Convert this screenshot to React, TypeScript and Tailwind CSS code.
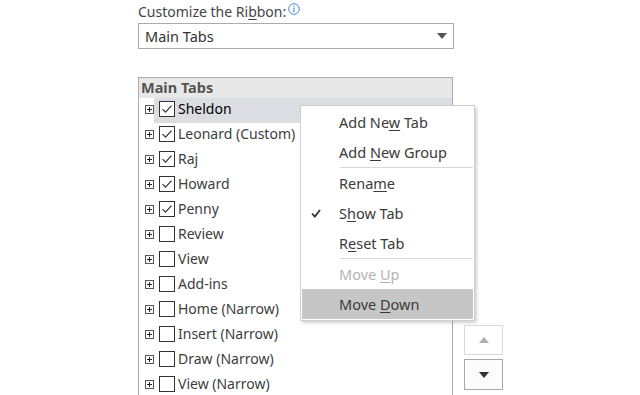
import React from "react"

const font = { fontFamily: '"Noto Sans", "Open Sans", sans-serif' }

type Row = { label: string; checked: boolean; selected?: boolean }

const rows: Row[] = [
  { label: "Sheldon", checked: true, selected: true },
  { label: "Leonard (Custom)", checked: true },
  { label: "Raj", checked: true },
  { label: "Howard", checked: true },
  { label: "Penny", checked: true },
  { label: "Review", checked: false },
  { label: "View", checked: false },
  { label: "Add-ins", checked: false },
  { label: "Home (Narrow)", checked: false },
  { label: "Insert (Narrow)", checked: false },
  { label: "Draw (Narrow)", checked: false },
  { label: "View (Narrow)", checked: false },
]

function PlusBox() {
  return (
    <svg width="9" height="9" viewBox="0 0 9 9" className="shrink-0">
      <rect x="0.5" y="0.5" width="8" height="8" fill="white" stroke="#555" />
      <path d="M2 4.5h5M4.5 2v5" stroke="#222" strokeWidth="1" />
    </svg>
  )
}

function CheckBox({ checked }: { checked: boolean }) {
  return (
    <svg width="16" height="16" viewBox="0 0 16 16" className="shrink-0">
      <rect x="0.5" y="0.5" width="15" height="15" fill="white" stroke="#333" />
      {checked && <path d="M3.5 8.2l3 3 6-6.5" fill="none" stroke="#333" strokeWidth="1.2" />}
    </svg>
  )
}

// letter with access-key underline
function U({ children }: { children: React.ReactNode }) {
  return <span className="underline underline-offset-[2px] decoration-1">{children}</span>
}

function MenuItem({
  children,
  checked,
  disabled,
  active,
}: {
  children: React.ReactNode
  checked?: boolean
  disabled?: boolean
  active?: boolean
}) {
  return (
    <div
      className={`h-[30px] mx-[1px] flex items-center relative ${active ? "bg-[#c6c6c6]" : ""} ${
        disabled ? "text-[#b4b4b4]" : "text-[#3a3a3a]"
      }`}
    >
      {checked && (
        <svg width="10" height="9" viewBox="0 0 10 9" className="absolute left-[9px] top-[11px]">
          <path d="M1 4.5l2.8 3L9 1" fill="none" stroke="#333" strokeWidth="1.8" />
        </svg>
      )}
      <span className="pl-[37px]">{children}</span>
    </div>
  )
}

export default function App() {
  return (
    <div className="w-[640px] h-[395px] overflow-hidden bg-white relative text-[14px] leading-none" style={font}>
      <div className="pl-[138px] pt-[3px]">
        {/* Label */}
        <div className="flex items-start h-[20px] text-[#444] text-[14px]">
          <span className="pt-[2px]">
            Customize the Ri<U>b</U>bon:
          </span>
          <svg width="12" height="12" viewBox="0 0 12 12" className="ml-[2px]">
            <circle cx="6" cy="6" r="5.3" fill="none" stroke="#3a7bd5" strokeWidth="0.9" />
            <rect x="5.5" y="2.6" width="1" height="1.1" fill="#3a7bd5" />
            <rect x="5.5" y="4.6" width="1" height="4.6" fill="#3a7bd5" />
          </svg>
        </div>

        {/* Dropdown */}
        <div className="w-[316px] h-[26px] border border-[#ababab] flex items-center justify-between pl-[6px] pr-[6px] text-[#333] text-[14.5px] bg-white">
          <span>Main Tabs</span>
          <svg width="10" height="6" viewBox="0 0 10 6">
            <path d="M0 0h10L5 6z" fill="#555" />
          </svg>
        </div>

        <div className="flex mt-[28px]">
          {/* List box */}
          <div className="w-[315px] h-[340px] border border-[#ababab] border-b-0 shrink-0">
            <div className="h-[20px] bg-[#e8e8e8] flex items-center pl-[2px] pb-[1px] font-bold text-[14.5px] text-[#555]">
              Main Tabs
            </div>
            {rows.map((r) => (
              <div key={r.label} className="h-[25px] flex items-center pl-[6px] pb-[3px]">
                <PlusBox />
                <div
                  className={`flex-1 h-[25px] -mb-[3px] flex items-center pl-[5px] pb-[3px] gap-[3px] ${
                    r.selected ? "bg-[#dcdde2] text-black" : "text-[#3d3d3d]"
                  }`}
                >
                  <CheckBox checked={r.checked} />
                  <span className="text-[14px] whitespace-nowrap">{r.label}</span>
                </div>
              </div>
            ))}
          </div>

          {/* Up / down buttons */}
          <div className="flex flex-col gap-[4px] pt-[248px] ml-[11px]">
            <div className="w-[39px] h-[30px] border border-[#dadada] flex items-center justify-center bg-white">
              <svg width="10" height="6" viewBox="0 0 10 6">
                <path d="M5 0l5 6H0z" fill="#b0b0b0" />
              </svg>
            </div>
            <div className="w-[39px] h-[31px] border border-[#a8a8a8] flex items-center justify-center bg-[#fcfcfc]">
              <svg width="10" height="6" viewBox="0 0 10 6">
                <path d="M0 0h10L5 6z" fill="#333" />
              </svg>
            </div>
          </div>
        </div>
      </div>

      {/* Context menu */}
      <div className="absolute left-[300px] top-[105px] w-[175px] bg-white border border-[#cfcfcf] shadow-[2px_2px_3px_rgba(0,0,0,0.18)] py-[1px] text-[14.5px]">
        <MenuItem>
          Add Ne<U>w</U> Tab
        </MenuItem>
        <MenuItem>
          Add <U>N</U>ew Group
        </MenuItem>
        <div className="h-px bg-[#d8d8d8] ml-[39px] mr-[1px]" />
        <MenuItem>
          Rena<U>m</U>e
        </MenuItem>
        <MenuItem checked>
          S<U>h</U>ow Tab
        </MenuItem>
        <MenuItem>
          R<U>e</U>set Tab
        </MenuItem>
        <div className="h-px bg-[#d8d8d8] ml-[39px] mr-[1px]" />
        <MenuItem disabled>
          Move <U>U</U>p
        </MenuItem>
        <MenuItem active>
          Move <U>D</U>own
        </MenuItem>
      </div>
    </div>
  )
}
